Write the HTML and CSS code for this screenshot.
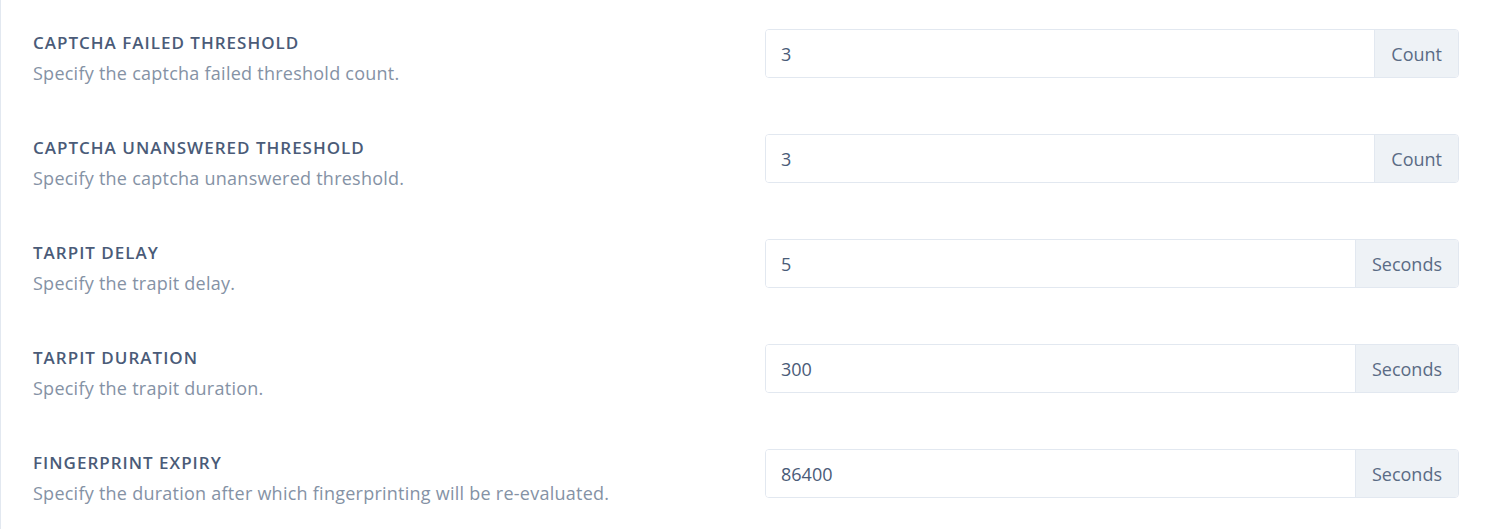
FILE: index.html
```html
<!DOCTYPE html>
<html lang="en">
<head>
<meta charset="utf-8">
<title>Settings</title>
<link rel="stylesheet" href="styles.css">
</head>
<body>
<div class="panel">
  <div class="row">
    <div class="info">
      <div class="title">CAPTCHA FAILED THRESHOLD</div>
      <div class="desc">Specify the captcha failed threshold count.</div>
    </div>
    <div class="field">
      <input class="input" type="text" value="3">
      <span class="addon">Count</span>
    </div>
  </div>
  <div class="row">
    <div class="info">
      <div class="title">CAPTCHA UNANSWERED THRESHOLD</div>
      <div class="desc">Specify the captcha unanswered threshold.</div>
    </div>
    <div class="field">
      <input class="input" type="text" value="3">
      <span class="addon">Count</span>
    </div>
  </div>
  <div class="row">
    <div class="info">
      <div class="title">TARPIT DELAY</div>
      <div class="desc">Specify the trapit delay.</div>
    </div>
    <div class="field">
      <input class="input" type="text" value="5">
      <span class="addon">Seconds</span>
    </div>
  </div>
  <div class="row">
    <div class="info">
      <div class="title">TARPIT DURATION</div>
      <div class="desc">Specify the trapit duration.</div>
    </div>
    <div class="field">
      <input class="input" type="text" value="300">
      <span class="addon">Seconds</span>
    </div>
  </div>
  <div class="row">
    <div class="info">
      <div class="title">FINGERPRINT EXPIRY</div>
      <div class="desc">Specify the duration after which fingerprinting will be re-evaluated.</div>
    </div>
    <div class="field">
      <input class="input" type="text" value="86400">
      <span class="addon">Seconds</span>
    </div>
  </div>
</div>
</body>
</html>
```
FILE: styles.css
```css
html, body {
  margin: 0;
  padding: 0;
  background: #ffffff;
}
body {
  font-family: "Open Sans", "Noto Sans", sans-serif;
}
.panel {
  border-left: 1px solid #e2e8f0;
  min-height: 529px;
  box-sizing: border-box;
  padding: 0 32px 0 32px;
}
.row {
  display: flex;
  align-items: flex-start;
  padding: 29px 0 20px 0;
}
.info {
  flex: 1;
  height: 56px;
  padding-top: 2px;
  box-sizing: border-box;
}
.title {
  font-size: 17px;
  line-height: 24px;
  font-weight: 600;
  color: #4a5b78;
  letter-spacing: 1px;
}
.desc {
  margin-top: 6px;
  font-size: 18px;
  line-height: 24px;
  color: #8592a5;
  letter-spacing: 0.25px;
  white-space: nowrap;
}
.field {
  width: 694px;
  display: flex;
  height: 49px;
  box-sizing: border-box;
  border: 1px solid #e2e8f0;
  border-radius: 4px;
  overflow: hidden;
}
.input {
  flex: 1;
  min-width: 0;
  border: 0;
  outline: none;
  padding: 0 15px;
  font-family: inherit;
  font-size: 18px;
  color: #4a5b78;
  background: #fff;
}
.addon {
  display: flex;
  align-items: center;
  padding: 0 16px;
  background: #eef2f6;
  border-left: 1px solid #e2e8f0;
  font-size: 18px;
  color: #5a6b85;
}
```
